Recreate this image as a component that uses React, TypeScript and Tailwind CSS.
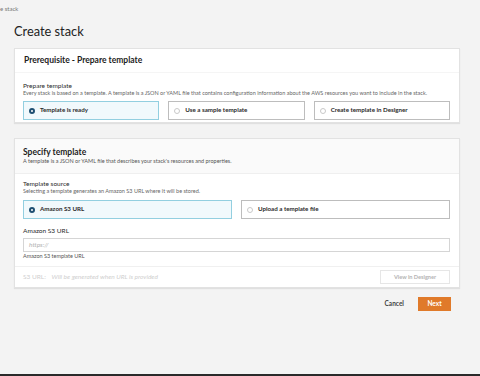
import React from 'react';

const font = { fontFamily: 'Lato, "Liberation Sans", sans-serif' };

const Radio: React.FC<{ checked?: boolean }> = ({ checked }) =>
  checked ? (
    <span className="w-[6px] h-[6px] rounded-full border-[2px] border-[#1e4f72] bg-white shrink-0" />
  ) : (
    <span className="w-[6px] h-[6px] rounded-full border border-[#c9c9c9] bg-white shrink-0" />
  );

const Option: React.FC<{ label: string; checked?: boolean }> = ({ label, checked }) => (
  <div
    className={`h-[19px] flex items-center gap-[5px] pl-[5px] border ${
      checked ? 'border-[#93cfe0] bg-[#f1f9fc]' : 'border-[#bdbdbd] bg-white'
    }`}
  >
    <Radio checked={checked} />
    <span className="text-[6.2px] font-bold text-[#2b2b2b] leading-none">{label}</span>
  </div>
);

const App: React.FC = () => {
  return (
    <div className="h-[376px] w-[480px] bg-[#f3f3f3] flex flex-col overflow-hidden" style={font}>
      {/* Breadcrumb (cut off) */}
      <div className="pt-[6px] h-[14px] text-[6px] leading-[6px] text-[#777]">e stack</div>

      {/* Title */}
      <h1 className="mt-[9px] ml-[14px] text-[12.8px] leading-[16px] text-[#222]">Create stack</h1>

      {/* Prerequisite card */}
      <section className="mt-[9px] mx-[14px] w-[446px] bg-white border border-[#e2e2e2] shadow-[0_1px_1px_rgba(0,0,0,0.08)]">
        <div className="h-[24px] flex items-center pl-[9px] border-b border-[#f5f5f5]">
          <h2 className="text-[8.5px] font-bold text-[#1d1d1d]">Prerequisite - Prepare template</h2>
        </div>
        <div className="pl-[8px] pr-[9px] pt-[9px] pb-[2px]">
          <div className="text-[6.5px] leading-[8px] text-[#2a2a2a]">Prepare template</div>
          <p className="text-[5.5px] leading-[7px] text-[#666] whitespace-nowrap">
            Every stack is based on a template. A template is a JSON or YAML file that contains configuration information about the AWS resources you want to include in the stack.
          </p>
          <div className="mt-[4px] grid grid-cols-3 gap-[9px]">
            <Option label="Template is ready" checked />
            <Option label="Use a sample template" />
            <Option label="Create template in Designer" />
          </div>
        </div>
      </section>

      {/* Specify template card */}
      <section className="mt-[15px] mx-[14px] w-[446px] bg-white border border-[#e2e2e2] shadow-[0_1px_1px_rgba(0,0,0,0.08)]">
        <div className="h-[35px] bg-[#fafafa] border-b border-[#efefef] pl-[8px] pt-[8px]">
          <h2 className="text-[8.5px] leading-[11px] font-bold text-[#1d1d1d]">Specify template</h2>
          <p className="text-[5.5px] leading-[7px] text-[#555]">
            A template is a JSON or YAML file that describes your stack's resources and properties.
          </p>
        </div>
        <div className="pl-[8px] pr-[9px] pt-[6px]">
          <div className="text-[6.5px] leading-[8px] text-[#2a2a2a]">Template source</div>
          <p className="text-[5.5px] leading-[7px] text-[#666]">
            Selecting a template generates an Amazon S3 URL where it will be stored.
          </p>
          <div className="mt-[5px] grid grid-cols-2 gap-[9px]">
            <Option label="Amazon S3 URL" checked />
            <Option label="Upload a template file" />
          </div>

          <div className="mt-[8px] text-[6.5px] leading-[8px] text-[#2a2a2a]">Amazon S3 URL</div>
          <div className="mt-[3px] h-[14px] border border-[#d5d5d5] flex items-center pl-[5px]">
            <span className="text-[6.5px] italic text-[#b0b0b0]">https://</span>
          </div>
          <p className="mt-[1px] text-[5.5px] leading-[7px] text-[#555]">Amazon S3 template URL</p>
        </div>
        <div className="mt-[6px] border-t border-[#f0f0f0] h-[21px] flex items-center justify-between pl-[8px] pr-[9px]">
          <span className="text-[6.5px] text-[#cfcfcf]">
            S3 URL: <span className="italic ml-[4px]">Will be generated when URL is provided</span>
          </span>
          <button className="w-[70px] h-[14px] border border-[#e6e6e6] bg-white text-[5.6px] font-bold text-[#b3b3b3]">
            View in Designer
          </button>
        </div>
      </section>

      {/* Footer actions */}
      <div className="mt-[9px] mr-[29px] flex items-center justify-end gap-[14px]">
        <button className="text-[6.5px] font-bold text-[#444]">Cancel</button>
        <button className="w-[33px] h-[14px] bg-[#e07a2a] text-[6.5px] font-bold text-white">Next</button>
      </div>

      <div className="flex-1" />
      <div className="h-[2px] bg-[#2a2a2a]" />
    </div>
  );
};

export default App;
